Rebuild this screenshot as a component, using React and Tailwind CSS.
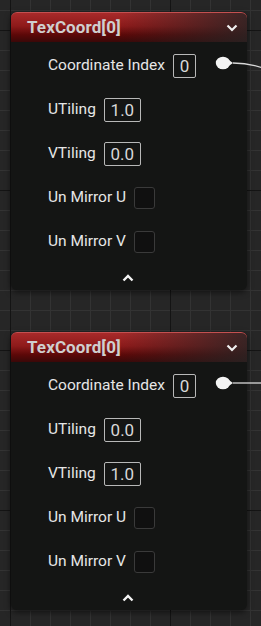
import React from "react";

function Pin() {
  return (
    <svg width="20" height="14" viewBox="0 0 20 14" className="block">
      <ellipse cx="8" cy="7" rx="7.2" ry="6.3" fill="#f4f4f4" />
      <path d="M13 3.5 L18 7 L13 10.5 Z" fill="#f4f4f4" />
    </svg>
  );
}

function ValueBox({ v, w }) {
  return (
    <div
      className={`${w} h-[24px] border border-[#b8b8b8] rounded-[2px] flex items-center justify-center text-[17px] text-[#d8d8d8] leading-none`}
    >
      {v}
    </div>
  );
}

function Check() {
  return <div className="w-[21px] h-[22px] rounded-[3px] border border-[#3a3a3a] bg-[#101010]" />;
}

function Row({ label, children }) {
  return (
    <div className="h-[24px] flex items-center gap-2">
      <span className="text-[15.5px] text-[#e6e6e6] leading-none">{label}</span>
      {children}
    </div>
  );
}

function Node({ u, v, curved }) {
  return (
    <div className="relative w-[236px] h-[278px] rounded-[6px] bg-[#141514] shadow-[0_2px_6px_rgba(0,0,0,0.6)] flex flex-col">
      <div className="h-[30px] rounded-t-[6px] border-t border-[#c45050] bg-[linear-gradient(90deg,rgba(0,0,0,0)_0%,rgba(0,0,0,0)_45%,rgba(40,36,36,0.85)_100%),linear-gradient(180deg,#a82a2a_0%,#8e1a1a_45%,#5c0808_75%,#3a0808_100%)] flex items-center pl-[16px] pr-[9px]">
        <span className="font-bold text-[17px] text-[#cfcfcf] tracking-[0.1px]">TexCoord[0]</span>
        <svg width="12" height="8" viewBox="0 0 12 8" className="ml-auto">
          <path d="M1.5 1.5 L6 6 L10.5 1.5" stroke="#f0f0f0" strokeWidth="2.2" fill="none" />
        </svg>
      </div>
      <div className="flex flex-col gap-[20px] pl-[37px] pt-[12px]">
        <Row label="Coordinate Index">
          <ValueBox v="0" w="w-[23px]" />
        </Row>
        <Row label="UTiling">
          <ValueBox v={u} w="w-[37px]" />
        </Row>
        <Row label="VTiling">
          <ValueBox v={v} w="w-[37px]" />
        </Row>
        <Row label="Un Mirror U">
          <Check />
        </Row>
        <Row label="Un Mirror V">
          <Check />
        </Row>
      </div>
      <div className="flex justify-center mt-[20px] pr-[2px]">
        <svg width="12" height="8" viewBox="0 0 12 8">
          <path d="M1.5 6.5 L6 2 L10.5 6.5" stroke="#f4f4f4" strokeWidth="2.4" fill="none" />
        </svg>
      </div>
      <div className="absolute left-[204px] top-[44px]">
        <Pin />
      </div>
      <svg className="absolute left-[222px] top-[40px]" width="30" height="30" viewBox="0 0 30 30">
        {curved ? (
          <path d="M0 11 C 10 11, 18 12, 30 16" stroke="#d8d8d8" strokeWidth="1.3" fill="none" />
        ) : (
          <path d="M0 11 L 30 11" stroke="#d8d8d8" strokeWidth="1.3" fill="none" />
        )}
      </svg>
    </div>
  );
}

export default function App() {
  return (
    <div className="w-[261px] h-[626px] overflow-hidden bg-[#262626] bg-[linear-gradient(90deg,#141414_1px,transparent_1px),linear-gradient(180deg,#141414_1px,transparent_1px),linear-gradient(90deg,#333333_1px,transparent_1px),linear-gradient(180deg,#333333_1px,transparent_1px)] bg-[size:160px_160px,160px_160px,20px_20px,20px_20px] bg-[position:10px_30px,10px_30px,10px_10px,10px_10px] font-['Roboto',sans-serif]">
      <div className="flex flex-col gap-[42px] pl-[11px] pt-[12px]">
        <Node u="1.0" v="0.0" curved />
        <Node u="0.0" v="1.0" />
      </div>
    </div>
  );
}
